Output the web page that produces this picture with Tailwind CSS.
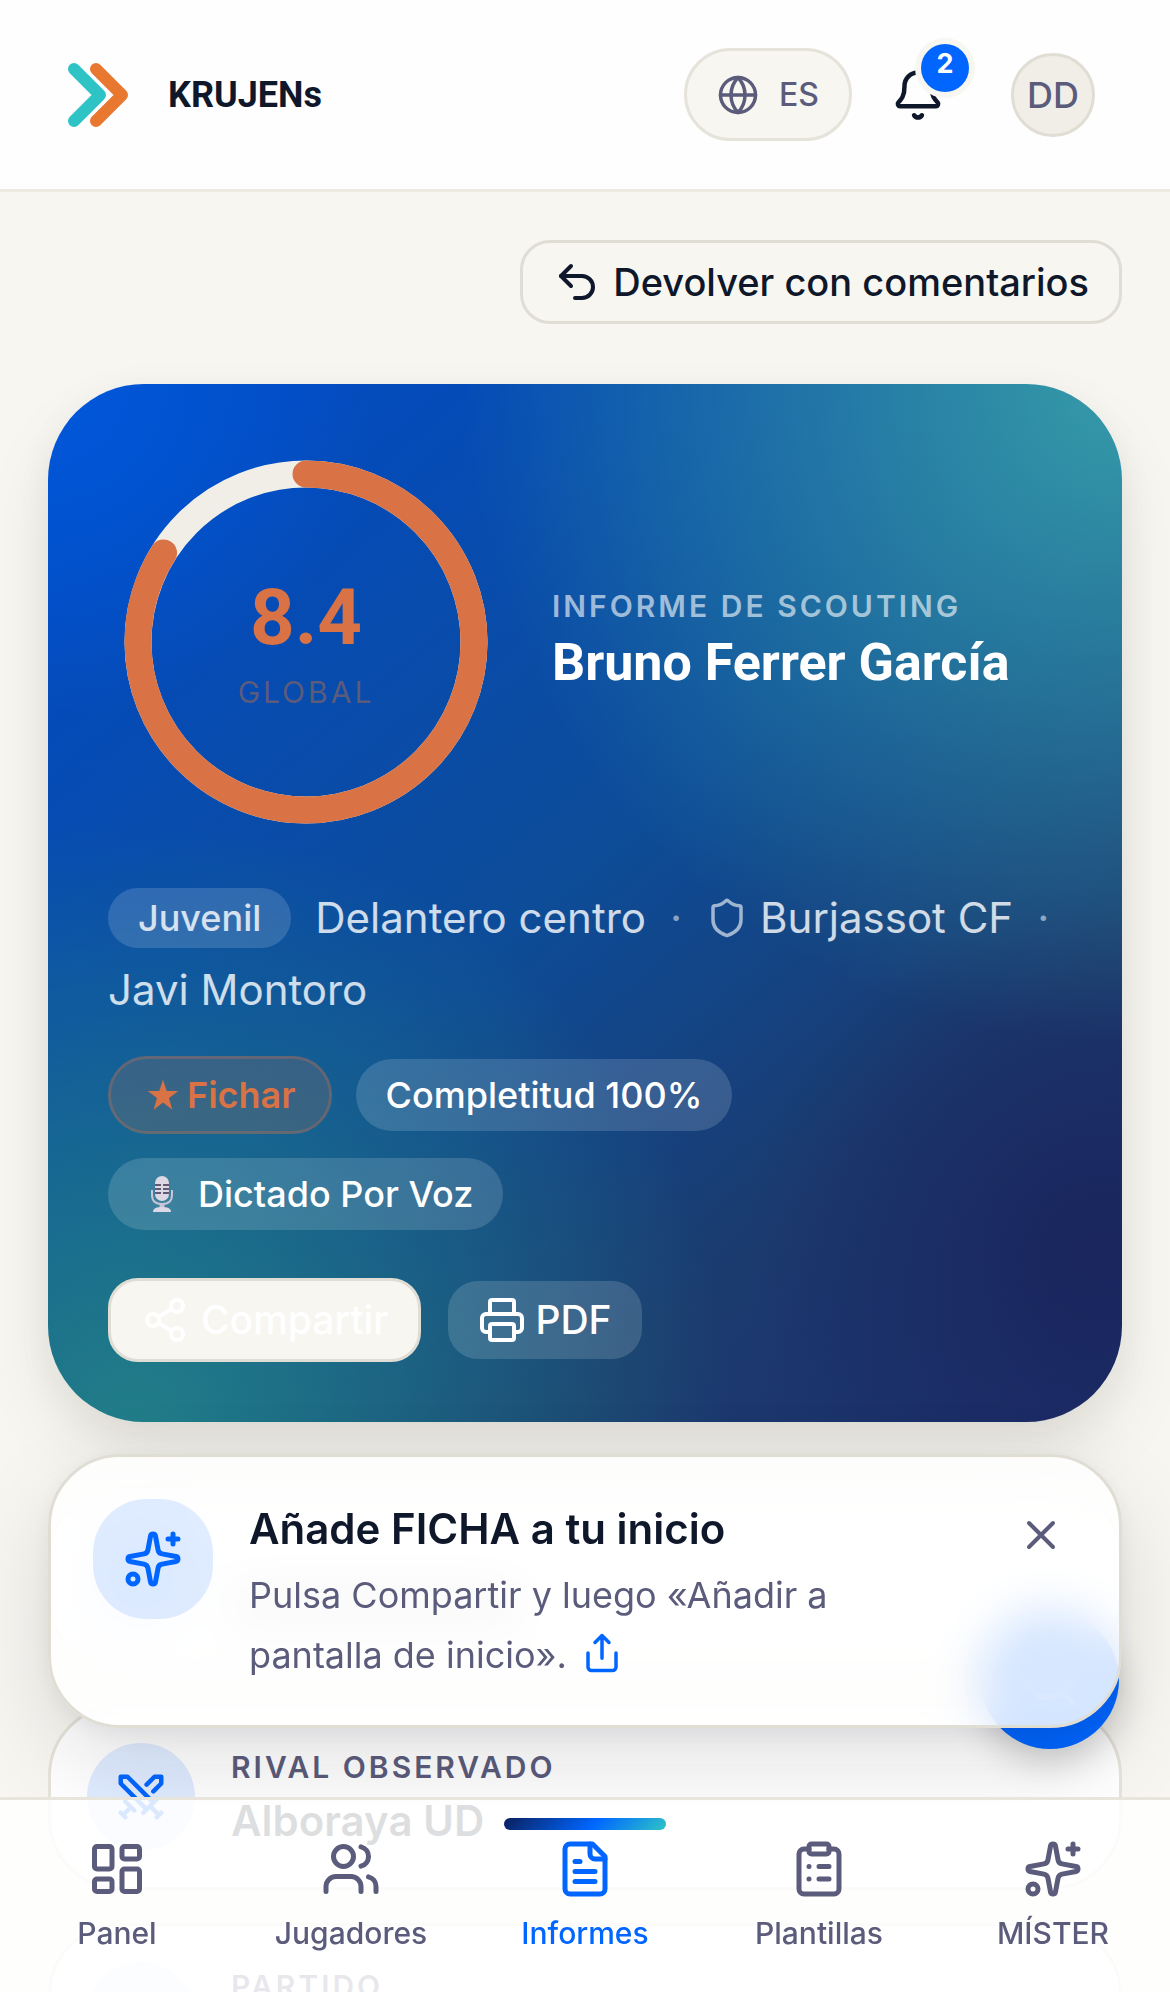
<!DOCTYPE html>
<html lang="es">
<head>
    <meta charset="UTF-8">
    <meta name="viewport" content="width=device-width, initial-scale=1.0">
    <title>KRUJENs - Informe de scouting</title>
    <script src="https://cdn.jsdelivr.net/npm/@tailwindcss/browser@4"></script>
</head>
<body class="bg-[#f7f6f1] text-[#0f172a] font-['Inter',sans-serif] h-screen overflow-hidden">
    <!-- Header -->
    <header class="flex items-center justify-between h-48 pl-15 pr-[75px] bg-[#fefefe] border-b-3 border-[#edeae3]">
        <a href="#" class="flex items-center gap-8">
            <svg class="w-19 h-19" viewBox="0 0 76 76" fill="none" stroke-width="12" stroke-linecap="round" stroke-linejoin="round">
                <path d="M36 12 62 38 36 64" stroke="#e8782f"/>
                <path d="M14 12 40 38 14 64" stroke="#fefefe" stroke-width="18"/>
                <path d="M14 12 40 38 14 64" stroke="#2ec4c6"/>
            </svg>
            <span class="font-['Roboto',sans-serif] font-bold text-4xl">KRUJENs</span>
        </a>
        <div class="flex items-center text-[#5b5b7b]">
            <button class="flex items-center gap-5 h-[93px] px-[30px] rounded-full border-3 border-[#e6e3da] bg-[#f7f6f1] text-[32px] font-medium">
                <svg class="size-[42px]" viewBox="0 0 24 24" fill="none" stroke="currentColor" stroke-width="2" stroke-linecap="round" stroke-linejoin="round"><circle cx="12" cy="12" r="10"/><path d="M12 2a14.5 14.5 0 0 0 0 20 14.5 14.5 0 0 0 0-20"/><path d="M2 12h20"/></svg>
                ES
            </button>
            <button class="relative flex items-center justify-center size-[132px] text-[#0f172a]" aria-label="Notificaciones">
                <svg class="size-[54px]" viewBox="0 0 24 24" fill="none" stroke="currentColor" stroke-width="2" stroke-linecap="round" stroke-linejoin="round"><path d="M10.268 21a2 2 0 0 0 3.464 0"/><path d="M3.262 15.326A1 1 0 0 0 4 17h16a1 1 0 0 0 .74-1.673C19.41 13.956 18 12.499 18 8A6 6 0 0 0 6 8c0 4.499-1.411 5.956-2.738 7.326"/></svg>
                <span class="absolute top-[15px] right-[15px] flex justify-center size-12 rounded-full bg-[#0066ff] ring-6 ring-[#f7f6f1] text-white text-[27px] leading-10 font-bold">2</span>
            </button>
            <button class="flex items-center justify-center size-21 ml-[27px] rounded-full border-3 border-[#e0ddd4] bg-[#f1eee7] text-4xl font-medium">DD</button>
        </div>
    </header>

    <main class="px-12 pt-12">
        <div class="flex justify-end">
            <button class="flex items-center gap-3 h-21 px-[30px] rounded-[30px] border-3 border-[#e0ddd4] text-[38px] font-medium">
                <svg class="size-12" viewBox="0 0 24 24" fill="none" stroke="currentColor" stroke-width="2" stroke-linecap="round" stroke-linejoin="round"><path d="M9 14 4 9l5-5"/><path d="M4 9h10.5a5.5 5.5 0 0 1 0 11H11"/></svg>
                Devolver con comentarios
            </button>
        </div>

        <!-- Player card -->
        <section class="mt-15 p-15 rounded-[96px] text-white shadow-[0_12px_36px_rgba(40,30,10,0.06),0_36px_72px_rgba(40,30,10,0.08)] bg-[radial-gradient(circle_at_0%_0%,#0058dc_0%,transparent_22%),radial-gradient(circle_at_100%_0%,#369ba8_0%,transparent_44%),radial-gradient(circle_at_8%_100%,#217e88_0%,transparent_42%),radial-gradient(circle_at_98%_84%,#1a255d_0%,transparent_26%),linear-gradient(140deg,#034bc0_10%,#0d4c98_48%,#1b3b6e_75%,#1d2f6c_100%)]">
            <div class="flex items-center gap-12">
                <div class="relative size-[396px] shrink-0">
                    <svg class="size-full -rotate-90" viewBox="0 0 132 132" fill="none" stroke-width="9">
                        <circle cx="66" cy="66" r="56" stroke="#f1eee7"/>
                        <circle cx="66" cy="66" r="56" stroke="#d97245" stroke-linecap="round" pathLength="100" stroke-dasharray="84 100"/>
                    </svg>
                    <div class="absolute inset-0 flex flex-col items-center justify-center gap-3 pt-2">
                        <span class="font-['Roboto',sans-serif] font-bold text-[78px] leading-[81px] text-[#d97245]">8.4</span>
                        <span class="text-3xl leading-[45px] tracking-widest text-[#5b5b7b]">GLOBAL</span>
                    </div>
                </div>
                <div class="pb-1">
                    <p class="text-3xl leading-[45px] font-semibold tracking-widest text-white/60">INFORME DE SCOUTING</p>
                    <h1 class="font-['Roboto',sans-serif] font-bold text-[52px] leading-[68px]">Bruno Ferrer García</h1>
                </div>
            </div>

            <div class="flex flex-wrap items-center gap-x-6 gap-y-3 mt-12 text-[42px] leading-[60px] text-white/80">
                <span class="px-[30px] rounded-full bg-white/15 text-4xl leading-[60px] font-medium">Juvenil</span>
                <span>Delantero centro</span>
                <span class="text-white/50">·</span>
                <span class="flex items-center gap-3">
                    <svg class="size-[42px] text-white/60" viewBox="0 0 24 24" fill="none" stroke="currentColor" stroke-width="2" stroke-linecap="round" stroke-linejoin="round"><path d="M20 13c0 5-3.5 7.5-7.66 8.95a1 1 0 0 1-.67-.01C7.5 20.5 4 18 4 13V6a1 1 0 0 1 1-1c2 0 4.5-1.2 6.24-2.72a1.17 1.17 0 0 1 1.52 0C14.51 3.81 17 5 19 5a1 1 0 0 1 1 1z"/></svg>
                    Burjassot CF
                </span>
                <span class="text-white/50">·</span>
                <span>Javi Montoro</span>
            </div>

            <div class="flex flex-wrap items-center gap-6 mt-9 pr-60 text-4xl leading-[72px] font-medium">
                <span class="flex items-center gap-2 pl-9 pr-[33px] rounded-full border-3 border-[#d97245]/40 bg-[#d97245]/18 bg-clip-padding text-[#d97245] font-semibold">
                    <svg class="size-8" viewBox="0 0 24 24" fill="currentColor"><path d="M12 0.5 14.8 9H23.5L16.5 14.3 19 23 12 17.7 5 23 7.5 14.3 0.5 9H9.2z"/></svg>
                    Fichar
                </span>
                <span class="px-[30px] rounded-full bg-white/15">Completitud 100%</span>
                <span class="flex items-center gap-3 px-[30px] rounded-full bg-white/15">
                    <svg class="w-12 h-9" viewBox="0 0 48 36" fill="none">
                        <path d="M14 14v5c0 6 4 9 10 9s10-3 10-9v-5" stroke="#c9c5d6" stroke-width="2"/>
                        <rect x="17" y="0" width="14" height="25" rx="7" fill="#dcd8e4"/>
                        <path d="M17 9h6M25 9h6M17 13h6M25 13h6M17 17h6M25 17h6" stroke="#3a2f4c" stroke-width="1.6"/>
                        <path d="M24 28v3" stroke="#c9c5d6" stroke-width="5"/>
                        <path d="M15 36c0-4 4-5 9-5s9 1 9 5z" fill="#dcd8e4"/>
                    </svg>
                    Dictado Por Voz
                </span>
            </div>

            <div class="flex items-center gap-[27px] mt-12 text-[39px] font-medium">
                <button class="flex items-center gap-3 h-21 px-[30px] rounded-[30px] border-3 border-[#e0ddd4] bg-[#f7f6f1]">
                    <svg class="size-12" viewBox="0 0 24 24" fill="none" stroke="currentColor" stroke-width="2" stroke-linecap="round" stroke-linejoin="round"><circle cx="18" cy="5" r="3"/><circle cx="6" cy="12" r="3"/><circle cx="18" cy="19" r="3"/><path d="m8.59 13.51 6.83 3.98M15.41 6.51l-6.82 3.98"/></svg>
                    Compartir
                </button>
                <button class="flex items-center gap-[9px] h-[78px] px-[30px] rounded-[30px] bg-white/15">
                    <svg class="size-12" viewBox="0 0 24 24" fill="none" stroke="currentColor" stroke-width="2" stroke-linecap="round" stroke-linejoin="round"><path d="M6 18H4a2 2 0 0 1-2-2v-5a2 2 0 0 1 2-2h16a2 2 0 0 1 2 2v5a2 2 0 0 1-2 2h-2"/><path d="M6 9V3a1 1 0 0 1 1-1h10a1 1 0 0 1 1 1v6"/><rect x="6" y="14" width="12" height="8" rx="1"/></svg>
                    PDF
                </button>
            </div>
        </section>

        <!-- Detail cards -->
        <div class="flex flex-col gap-[33px] mt-[63px]">
            <div class="flex gap-9 p-9 rounded-[72px] border-3 border-[#e6e3da] bg-white">
                <div class="size-27 rounded-full bg-[#0066ff]/12"></div>
                <div class="self-end w-72 h-10 mb-2 bg-neutral-300"></div>
            </div>
            <div class="flex gap-9 p-9 rounded-[72px] border-3 border-[#e6e3da] bg-white">
                <div class="flex items-center justify-center size-27 rounded-full bg-[#0066ff]/12 text-[#0066ff]">
                    <svg class="size-[54px]" viewBox="0 0 24 24" fill="none" stroke="currentColor" stroke-width="2" stroke-linecap="round" stroke-linejoin="round"><path d="M14.5 17.5 3 6V3h3l11.5 11.5"/><path d="m13 19 6-6M16 16l4 4M19 21l2-2M14.5 6.5 18 3h3v3l-3.5 3.5M5 14l4 4M7 17l-3 3M3 19l2 2"/></svg>
                </div>
                <div>
                    <p class="text-3xl leading-[48px] font-semibold tracking-widest text-[#5b5b7b]">RIVAL OBSERVADO</p>
                    <p class="text-[42px] leading-[60px] font-semibold">Alboraya UD</p>
                </div>
            </div>
            <div class="flex gap-9 p-9 rounded-[72px] border-3 border-[#e6e3da] bg-white">
                <div class="size-27 rounded-full bg-[#0066ff]/12"></div>
                <p class="text-3xl leading-[48px] font-semibold tracking-widest text-[#5b5b7b]">PARTIDO</p>
            </div>
        </div>
    </main>

    <!-- Floating search -->
    <button class="fixed right-[51px] bottom-[243px] flex items-center justify-center size-[138px] rounded-full bg-[#0066ff] text-white shadow-[0_12px_36px_rgba(0,0,0,0.2)]" aria-label="Buscar">
        <svg class="size-15" viewBox="0 0 24 24" fill="none" stroke="currentColor" stroke-width="2" stroke-linecap="round"><circle cx="11" cy="11" r="8"/><path d="m21 21-4.3-4.3"/></svg>
    </button>

    <!-- Install prompt -->
    <div class="fixed inset-x-12 bottom-[264px] flex items-start px-[42px] pt-[42px] pb-10 rounded-[72px] border-3 border-[#e0ddd4] bg-white/82 backdrop-blur-xl shadow-[0_6px_24px_rgba(20,20,30,0.06),0_36px_96px_rgba(20,20,30,0.12)]">
        <div class="flex items-center justify-center size-30 rounded-[54px] bg-[#0066ff]/12 text-[#0066ff]">
            <svg class="size-15" viewBox="0 0 24 24" fill="none" stroke="currentColor" stroke-width="2" stroke-linecap="round" stroke-linejoin="round"><path d="M11.017 2.814a1 1 0 0 1 1.966 0l1.051 5.558a2 2 0 0 0 1.594 1.594l5.558 1.051a1 1 0 0 1 0 1.966l-5.558 1.051a2 2 0 0 0-1.594 1.594l-1.051 5.558a1 1 0 0 1-1.966 0l-1.051-5.558a2 2 0 0 0-1.594-1.594l-5.558-1.051a1 1 0 0 1 0-1.966l5.558-1.051a2 2 0 0 0 1.594-1.594z"/><path d="M20 2v4M22 4h-4"/><circle cx="4" cy="20" r="2"/></svg>
        </div>
        <div class="flex-1 ml-9 mr-15">
            <h2 class="text-[42px] leading-[60px] font-semibold">Añade FICHA a tu inicio</h2>
            <p class="mt-1.5 text-4xl leading-[60px] text-[#5b5b7b]">
                Pulsa Compartir y luego «Añadir a pantalla de inicio».
                <svg class="inline-block size-[42px] ml-1 align-[-6px] text-[#0066ff]" viewBox="0 0 24 24" fill="none" stroke="currentColor" stroke-width="2" stroke-linecap="round" stroke-linejoin="round"><path d="M12 2v13M16 6l-4-4-4 4M4 12v8a2 2 0 0 0 2 2h12a2 2 0 0 0 2-2v-8"/></svg>
            </p>
        </div>
        <button class="flex items-center justify-center size-24 -m-3 text-[#5b5b7b]" aria-label="Cerrar">
            <svg class="size-12" viewBox="0 0 24 24" fill="none" stroke="currentColor" stroke-width="2" stroke-linecap="round"><path d="M18 6 6 18M6 6l12 12"/></svg>
        </button>
    </div>

    <!-- Bottom navigation -->
    <nav class="fixed inset-x-0 bottom-0 grid grid-cols-5 h-[195px] border-t-3 border-[#e8e5dc] bg-white/86 text-3xl leading-[45px] font-medium text-[#5b5b7b]">
        <a href="#" class="flex flex-col items-center gap-3 pt-[39px]">
            <svg class="size-15" viewBox="0 0 24 24" fill="none" stroke="currentColor" stroke-width="2" stroke-linejoin="round"><rect x="3" y="3" width="7" height="9" rx="1"/><rect x="14" y="3" width="7" height="5" rx="1"/><rect x="14" y="12" width="7" height="9" rx="1"/><rect x="3" y="16" width="7" height="5" rx="1"/></svg>
            Panel
        </a>
        <a href="#" class="flex flex-col items-center gap-3 pt-[39px]">
            <svg class="size-15" viewBox="0 0 24 24" fill="none" stroke="currentColor" stroke-width="2" stroke-linecap="round" stroke-linejoin="round"><path d="M16 21v-2a4 4 0 0 0-4-4H6a4 4 0 0 0-4 4v2"/><circle cx="9" cy="7" r="4"/><path d="M22 21v-2a4 4 0 0 0-3-3.87M16 3.13a4 4 0 0 1 0 7.75"/></svg>
            Jugadores
        </a>
        <a href="#" class="relative flex flex-col items-center gap-3 pt-[39px] text-[#0066ff]">
            <span class="absolute top-[18px] w-[162px] h-3 rounded-full bg-[linear-gradient(135deg,#0a1f5c_0%,#0066ff_55%,#2ec4c6_100%)]"></span>
            <svg class="size-15" viewBox="0 0 24 24" fill="none" stroke="currentColor" stroke-width="2" stroke-linecap="round" stroke-linejoin="round"><path d="M15 2H6a2 2 0 0 0-2 2v16a2 2 0 0 0 2 2h12a2 2 0 0 0 2-2V7z"/><path d="M14 2v4a2 2 0 0 0 2 2h4M10 9H8M16 13H8M16 17H8"/></svg>
            Informes
        </a>
        <a href="#" class="flex flex-col items-center gap-3 pt-[39px]">
            <svg class="size-15" viewBox="0 0 24 24" fill="none" stroke="currentColor" stroke-width="2" stroke-linecap="round" stroke-linejoin="round"><rect x="8" y="2" width="8" height="4" rx="1"/><path d="M16 4h2a2 2 0 0 1 2 2v14a2 2 0 0 1-2 2H6a2 2 0 0 1-2-2V6a2 2 0 0 1 2-2h2M12 11h4M12 16h4M8 11h.01M8 16h.01"/></svg>
            Plantillas
        </a>
        <a href="#" class="flex flex-col items-center gap-3 pt-[39px]">
            <svg class="size-15" viewBox="0 0 24 24" fill="none" stroke="currentColor" stroke-width="2" stroke-linecap="round" stroke-linejoin="round"><path d="M11.017 2.814a1 1 0 0 1 1.966 0l1.051 5.558a2 2 0 0 0 1.594 1.594l5.558 1.051a1 1 0 0 1 0 1.966l-5.558 1.051a2 2 0 0 0-1.594 1.594l-1.051 5.558a1 1 0 0 1-1.966 0l-1.051-5.558a2 2 0 0 0-1.594-1.594l-5.558-1.051a1 1 0 0 1 0-1.966l5.558-1.051a2 2 0 0 0 1.594-1.594z"/><path d="M20 2v4M22 4h-4"/><circle cx="4" cy="20" r="2"/></svg>
            MÍSTER
        </a>
    </nav>
</body>
</html>
